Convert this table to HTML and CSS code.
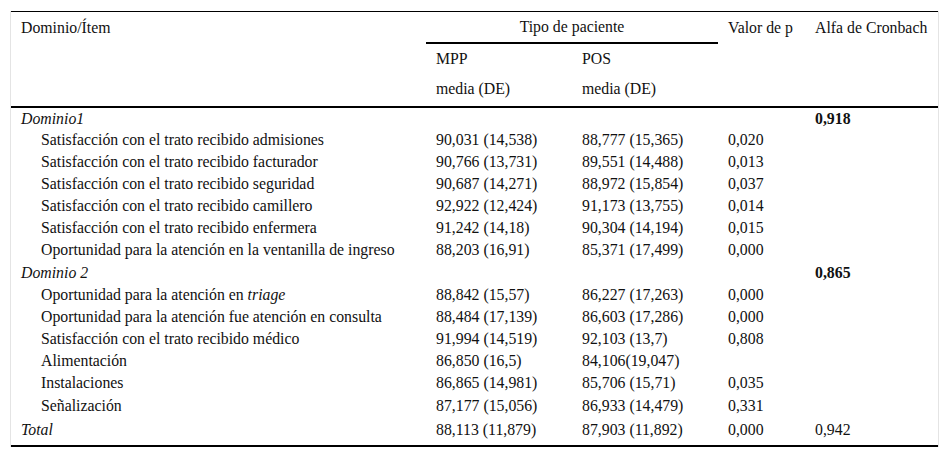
FILE: index.html
```html
<!DOCTYPE html>
<html lang="es">
<head>
<meta charset="utf-8">
<link rel="stylesheet" href="styles.css">
</head>
<body>
<div class="frame">
<table class="data">
  <colgroup>
    <col class="c1"><col class="c2"><col class="c3"><col class="c4"><col class="c5">
  </colgroup>
  <thead>
    <tr class="h1">
      <th rowspan="3" class="top">Dominio/Ítem</th>
      <th colspan="2" class="group">Tipo de paciente</th>
      <th rowspan="3" class="top">Valor de p</th>
      <th rowspan="3" class="top">Alfa de Cronbach</th>
    </tr>
    <tr class="h2"><th>MPP</th><th>POS</th></tr>
    <tr class="h3"><th>media (DE)</th><th>media (DE)</th></tr>
  </thead>
  <tbody>
    <tr class="dom dom1"><td><i>Dominio1</i></td><td></td><td></td><td></td><td><b>0,918</b></td></tr>
    <tr><td class="ind">Satisfacción con el trato recibido admisiones</td><td>90,031 (14,538)</td><td>88,777 (15,365)</td><td>0,020</td><td></td></tr>
    <tr><td class="ind">Satisfacción con el trato recibido facturador</td><td>90,766 (13,731)</td><td>89,551 (14,488)</td><td>0,013</td><td></td></tr>
    <tr><td class="ind">Satisfacción con el trato recibido seguridad</td><td>90,687 (14,271)</td><td>88,972 (15,854)</td><td>0,037</td><td></td></tr>
    <tr><td class="ind">Satisfacción con el trato recibido camillero</td><td>92,922 (12,424)</td><td>91,173 (13,755)</td><td>0,014</td><td></td></tr>
    <tr><td class="ind">Satisfacción con el trato recibido enfermera</td><td>91,242 (14,18)</td><td>90,304 (14,194)</td><td>0,015</td><td></td></tr>
    <tr><td class="ind">Oportunidad para la atención en la ventanilla de ingreso</td><td>88,203 (16,91)</td><td>85,371 (17,499)</td><td>0,000</td><td></td></tr>
    <tr class="dom dom2"><td><i>Dominio 2</i></td><td></td><td></td><td></td><td><b>0,865</b></td></tr>
    <tr><td class="ind">Oportunidad para la atención en <i>triage</i></td><td>88,842 (15,57)</td><td>86,227 (17,263)</td><td>0,000</td><td></td></tr>
    <tr><td class="ind">Oportunidad para la atención fue atención en consulta</td><td>88,484 (17,139)</td><td>86,603 (17,286)</td><td>0,000</td><td></td></tr>
    <tr><td class="ind">Satisfacción con el trato recibido médico</td><td>91,994 (14,519)</td><td>92,103 (13,7)</td><td>0,808</td><td></td></tr>
    <tr><td class="ind">Alimentación</td><td>86,850 (16,5)</td><td>84,106(19,047)</td><td></td><td></td></tr>
    <tr><td class="ind">Instalaciones</td><td>86,865 (14,981)</td><td>85,706 (15,71)</td><td>0,035</td><td></td></tr>
    <tr class="pre"><td class="ind">Señalización</td><td>87,177 (15,056)</td><td>86,933 (14,479)</td><td>0,331</td><td></td></tr>
    <tr class="total"><td><i>Total</i></td><td>88,113 (11,879)</td><td>87,903 (11,892)</td><td>0,000</td><td>0,942</td></tr>
  </tbody>
</table>
</div>
</body>
</html>
```

FILE: styles.css
```css
html, body {
  margin: 0;
  padding: 0;
  background: #ffffff;
}
body {
  font-family: "Liberation Serif", "Times New Roman", serif;
  font-size: 15.8px;
  color: #111111;
}
.frame {
  margin: 11px 0 0 10px;
  width: 927px;
  border-left: 1px solid #e4e4e4;
  border-right: 1px solid #e4e4e4;
}
.data {
  width: 927px;
  border-collapse: collapse;
  table-layout: fixed;
  border-top: 1px solid #000;
  border-bottom: 2px solid #000;
}
.data thead {
  border-bottom: 2px solid #000;
}
.c1 { width: 415px; }
.c2 { width: 146px; }
.c3 { width: 146px; }
.c4 { width: 87px; }
.c5 { width: 133px; }
th, td {
  padding: 0 0 0 10px;
  text-align: left;
  font-weight: normal;
  white-space: nowrap;
  vertical-align: middle;
}
thead tr.h1 th { height: 30px; line-height: 18px; }
thead th.top { vertical-align: top; padding-top: 7px; }
thead th.group {
  text-align: center;
  padding: 0;
  border-bottom: 2px solid #000;
}
thead tr.h2 th { height: 30px; line-height: 18px; }
thead tr.h3 th { height: 30px; padding-bottom: 2px; line-height: 18px; }
tbody td { height: 22px; line-height: 18px; }
td.ind { padding-left: 30px; }
tr.dom td b { font-weight: bold; }
tr.dom1 td { height: 21px; }
tr.dom2 td { height: 23px; }
tr.pre td { height: 23px; }
tr.total td { height: 24px; padding-top: 1px; padding-bottom: 3px; }
```
